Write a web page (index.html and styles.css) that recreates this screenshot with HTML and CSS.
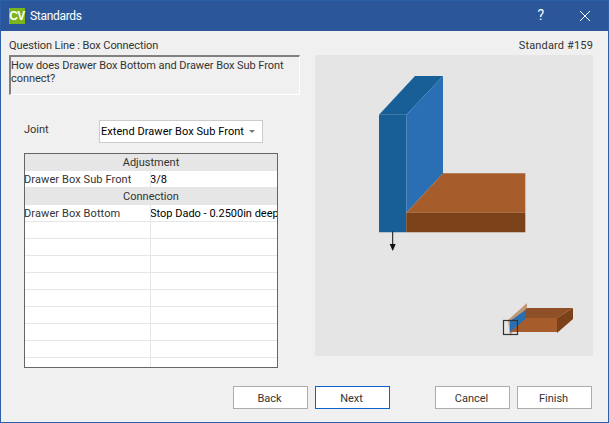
FILE: index.html
```html
<!DOCTYPE html>
<html lang="en">
<head>
<meta charset="utf-8">
<title>Standards</title>
<link rel="stylesheet" href="styles.css">
</head>
<body>
<div class="window">
  <header class="titlebar">
    <span class="app-icon">CV</span>
    <span class="title">Standards</span>
    <span class="help">?</span>
    <svg class="close" width="12" height="12" viewBox="0 0 12 12"><path d="M1 1 L11 11 M11 1 L1 11" stroke="#fff" stroke-width="1" fill="none"/></svg>
  </header>
  <div class="content">
    <div class="labels">
      <span class="line-label">Question Line : Box Connection</span>
      <span class="std-label">Standard #159</span>
    </div>
    <div class="main">
      <div class="left">
        <div class="question">How does Drawer Box Bottom and Drawer Box Sub Front connect?</div>
        <div class="joint">
          <span class="joint-label">Joint</span>
          <div class="combo"><span>Extend Drawer Box Sub Front</span><i class="caret"></i></div>
        </div>
        <div class="grid">
          <div class="row head">Adjustment</div>
          <div class="row"><div class="key">Drawer Box Sub Front</div><div class="val">3/8</div></div>
          <div class="row head">Connection</div>
          <div class="row"><div class="key">Drawer Box Bottom</div><div class="val">Stop Dado - 0.2500in deep</div></div>
          <div class="row"><div class="key"></div><div class="val"></div></div>
          <div class="row"><div class="key"></div><div class="val"></div></div>
          <div class="row"><div class="key"></div><div class="val"></div></div>
          <div class="row"><div class="key"></div><div class="val"></div></div>
          <div class="row"><div class="key"></div><div class="val"></div></div>
          <div class="row"><div class="key"></div><div class="val"></div></div>
          <div class="row"><div class="key"></div><div class="val"></div></div>
          <div class="row"><div class="key"></div><div class="val"></div></div>
          <div class="row"><div class="key"></div><div class="val"></div></div>
        </div>
      </div>
      <div class="preview">
        <svg width="278" height="301" viewBox="315 55 278 301">
          <polygon points="379,114.7 415,76 443,76 406.3,114.7" fill="#175f96"/>
          <polygon points="379,114.7 406.3,114.7 406.3,232.3 379,232.3" fill="#175f96"/>
          <polygon points="406.3,114.7 443,76 443,173.3 406.3,212.7" fill="#2a6fb3"/>
          <polygon points="406.3,212.7 443,173.3 525.3,173.3 525.3,212.7" fill="#a65c2b"/>
          <polygon points="406.3,212.7 525.3,212.7 525.3,232.3 406.3,232.3" fill="#7b4119"/>
          <path d="M392.7 231.5 V246" stroke="#111" stroke-width="1" fill="none"/>
          <polygon points="389.7,244 395.7,244 392.7,251" fill="#111"/>
          <polygon points="508,320 527,303 527,310 510,336" fill="#c09878"/>
          <polygon points="527,308 573,308 557,318 517,318" fill="#8f5027"/>
          <polygon points="517,318 557,318 557,332 510,332" fill="#a65c2b"/>
          <polygon points="557,318 573,308 573,319 557,333" fill="#7b4119"/>
          <polygon points="510,321 525.5,310 525.5,319 510,332" fill="#2a6fb3"/>
          <rect x="503.5" y="320.5" width="14" height="14" fill="none" stroke="#333" stroke-width="1.2"/>
        </svg>
      </div>
    </div>
    <div class="actions">
      <button class="btn">Back</button>
      <button class="btn default">Next</button>
      <button class="btn cancel">Cancel</button>
      <button class="btn">Finish</button>
    </div>
  </div>
</div>
</body>
</html>
```

FILE: styles.css
```css
* { box-sizing: border-box; }
html, body { margin: 0; padding: 0; }
body { width: 609px; height: 423px; overflow: hidden; font-family: Roboto, "Noto Sans", sans-serif; font-size: 11px; color: #333; }
.window { width: 609px; height: 423px; background: #f0f0f0; border: 1px solid #2b5fa8; display: flex; flex-direction: column; }
.titlebar { height: 30px; background: #2b579a; color: #fff; display: flex; align-items: center; padding-left: 8px; flex: none; }
.app-icon { width: 16px; height: 16px; background: #7ab51d; color: #fff; font: bold 12px/16px "Liberation Sans", sans-serif; text-align: center; letter-spacing: -.5px; }
.title { margin-left: 5px; font-size: 12px; letter-spacing: -.3px; flex: 1; }
.help { font-size: 14px; margin-right: 35px; transform: translateY(-1px); }
.close { margin-right: 17px; }
.content { flex: 1; padding: 7px 15px 0 8px; display: flex; flex-direction: column; }
.labels { display: flex; justify-content: space-between; height: 17px; line-height: 15px; }
.line-label { letter-spacing: -.1px; }
.std-label { letter-spacing: .15px; }
.main { display: flex; gap: 15px; height: 313px; }
.left { width: 291px; }
.question { height: 40px; border-style: solid; border-color: #808080 #fff #fff #808080; border-width: 2px 1px 1px 2px; line-height: 13px; padding: 2px 0 0 0; letter-spacing: -.06px; color: #333; }
.joint { display: flex; align-items: center; margin-top: 25px; padding-left: 15px; height: 23px; }
.joint-label { width: 75px; margin-top: -5px; }
.combo { width: 164px; height: 23px; background: #fff; border: 1px solid #ccc; display: flex; align-items: center; justify-content: space-between; padding: 0 7px 0 1px; color: #000; white-space: nowrap; letter-spacing: .05px; }
.caret { width: 0; height: 0; border-left: 3px solid transparent; border-right: 3px solid transparent; border-top: 3px solid #777; }
.grid { margin: 10px 0 0 15px; width: 254px; height: 215px; border: 1px solid #666; background: #fff; overflow: hidden; }
.row { display: flex; height: 17px; border-bottom: 1px solid #e6e6e6; line-height: 17px; white-space: nowrap; }
.row.head { background: #e6e6e6; justify-content: center; color: #333; }
.key { width: 126px; border-right: 1px solid #e6e6e6; flex: none; overflow: hidden; text-indent: -1px; letter-spacing: .1px; }
.val { flex: 1; overflow: hidden; color: #000; text-indent: -1px; }
.preview { width: 278px; height: 301px; background: #e5e5e5; }
.preview svg { display: block; }
.actions { display: flex; margin-top: 18px; padding-left: 224px; gap: 7px; }
.btn { width: 75px; height: 23px; padding: 1px 2px 0 0; background: #fff; border: 1px solid #adadad; border-radius: 0; font: inherit; color: #333; }
.btn.default { border-color: #0a64cc; }
.btn.cancel { margin-left: 38px; }
```
